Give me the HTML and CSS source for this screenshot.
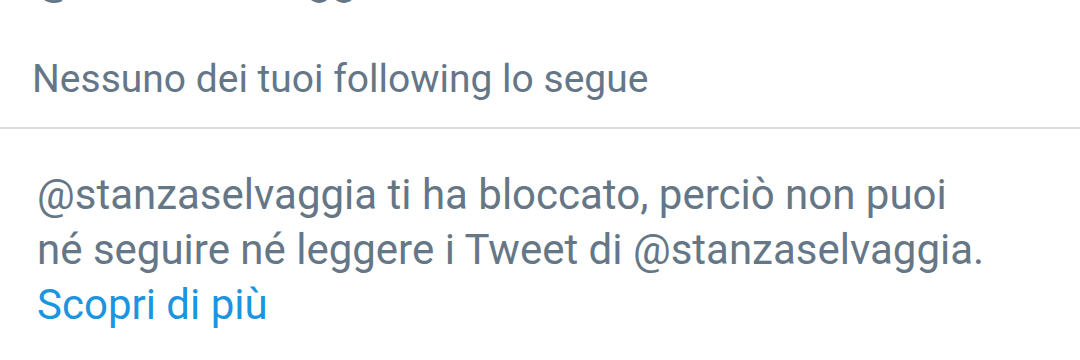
FILE: index.html
```html
<!DOCTYPE html>
<html lang="it">
<head>
<meta charset="utf-8">
<title>Profilo</title>
<link rel="stylesheet" href="styles.css">
</head>
<body>
<div class="page">
  <section class="profile-info">
    <div class="handle">@stanzaselvaggia</div>
    <div class="followers-note">Nessuno dei tuoi following lo segue</div>
  </section>
  <section class="blocked">
    <p class="blocked-text">@stanzaselvaggia ti ha bloccato, perciò non puoi<br>né seguire né leggere i Tweet di @stanzaselvaggia.<br><a class="learn-more" href="#">Scopri di più</a></p>
  </section>
</div>
</body>
</html>
```

FILE: styles.css
```css
html, body {
  margin: 0;
  padding: 0;
  background: #ffffff;
}

.page {
  width: 1080px;
  height: 360px;
  overflow: hidden;
  font-family: Roboto, "Noto Sans", sans-serif;
  color: #657786;
}

.profile-info {
  display: flex;
  flex-direction: column;
  padding: 0 0 0 32px;
  height: 129px;
  border-bottom: 2px solid #dcdcdc;
  box-sizing: border-box;
}

.handle {
  font-size: 44px;
  line-height: 44px;
  margin-top: -43px;
  height: 44px;
  padding-left: 3px;
  white-space: nowrap;
}

.followers-note {
  font-size: 39px;
  line-height: 48px;
  margin-top: 54px;
}

.blocked {
  padding: 38px 0 0 37px;
}

.blocked-text {
  margin: 0;
  font-size: 42px;
  line-height: 55px;
}

.learn-more {
  color: #1b95e0;
  text-decoration: none;
}
```
